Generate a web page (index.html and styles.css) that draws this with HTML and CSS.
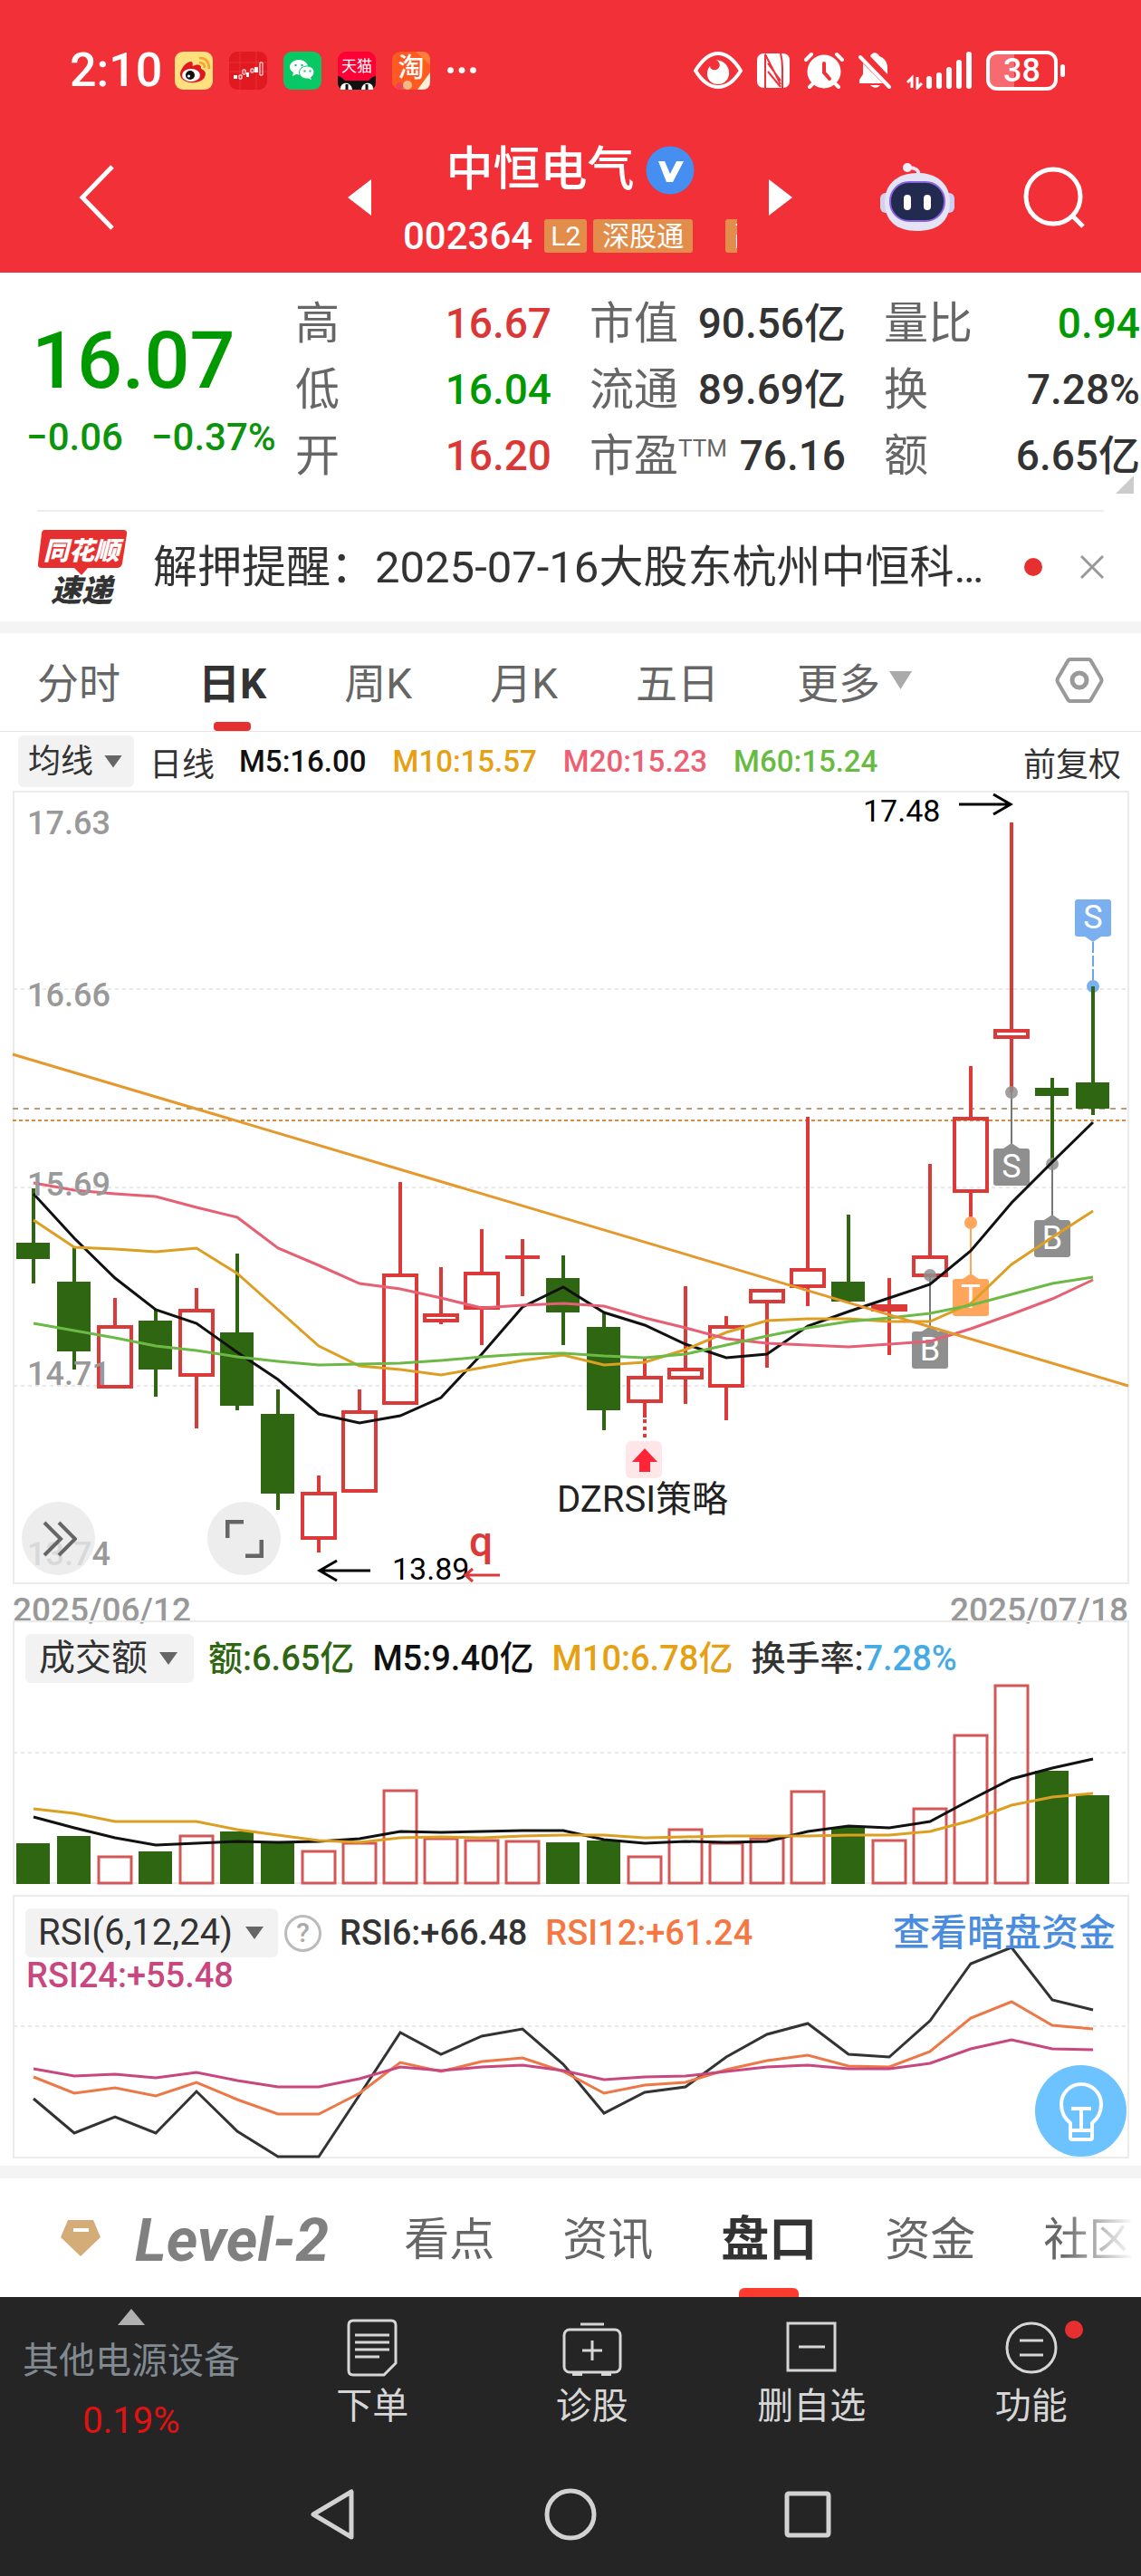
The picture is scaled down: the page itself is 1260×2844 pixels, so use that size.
FILE: index.html
```html
<!DOCTYPE html>
<html lang="zh-CN">

<head>
  <meta charset="UTF-8">
  <meta name="viewport" content="width=device-width, initial-scale=1.0">
  <title>中恒电气 002364</title>
  <link rel="stylesheet" href="styles.css">
</head>

<body>
<header class="header">
  <div class="status">
    <span class="time">2:10</span>
    <svg class="app" viewBox="0 0 42 42">
      <rect width="42" height="42" rx="9" fill="#ffdf7e"/>
      <path d="M27 12q6 0 6 6M27 7q11 0 11 12" fill="none" stroke="#f2a52c" stroke-width="2.6"/>
      <path d="M6 26C5 19 14 10 18 11c3 1 1 4 2 5 3-2 10-3 9 3 5 2 6 5 4 9-3 8-25 9-27-2z" fill="#e0191f"/>
      <ellipse cx="18" cy="26" rx="10" ry="7" fill="#fff"/>
      <circle cx="17" cy="26" r="5" fill="#111"/>
      <circle cx="15.500" cy="27" r="1.500" fill="#fff"/>
    </svg>
    <svg class="app" viewBox="0 0 42 42">
      <rect width="42" height="42" rx="9" fill="#e01a20"/>
      <path d="M0 12h42M0 22h42M12 0v42M30 0v42" stroke="#ea3a3e" stroke-width=".8"/>
      <path d="M5 26h4v4H5zM19 23h3v5h-3zM28 17h4v6h-4z" fill="#fff"/>
      <path d="M11 26h3v4h-3zM15 20h3v5h-3zM24 19h3v4h-3zM34 12h3v14h-3z" fill="none" stroke="#fff"/>
    </svg>
    <svg class="app" viewBox="0 0 42 42">
      <rect width="42" height="42" rx="9" fill="#07c865"/>
      <path d="M17 9c-6 0-10 4-10 8 0 3 2 5 4 6l-1 4 4-2c8 2 13-3 13-8 0-4-4-8-10-8z" fill="#fff"/>
      <path d="M26 16c-5 0-8.500 3-8.500 7s4 7.500 10 7l4 2-1-3.500c6-4 4-12.500-4.500-12.500z" fill="#fff" stroke="#07c865"/>
      <path d="M13.500 14v2M20.500 14v2M23.500 20.500v2M29.500 20.500v2" stroke="#07c865" stroke-width="2"/>
    </svg>
    <svg class="app" viewBox="0 0 42 42">
      <rect width="42" height="42" rx="9" fill="#ff0036"/>
      <path d="M0 27c3 0 6 3 8 5h26c2-2 5-5 8-5v7q0 8-9 8H9q-9 0-9-8z" fill="#111"/>
      <path d="M3 42c-1-9 12-10 13 0zM26 42c1-10 14-9 13 0z" fill="#fff"/>
      <path d="M10 36v6M32 36v6" stroke="#111" stroke-width="3"/>
      <text class="app-text" x="21" y="22" font-size="17">天猫</text>
    </svg>
    <svg class="app" viewBox="0 0 42 42">
      <rect width="42" height="42" rx="9" fill="#ff5a1f"/>
      <path d="M26 0h7q9 0 9 9v6z" fill="#ff7d3c"/>
      <path d="M28 42l14-19v10q0 9-9 9z" fill="#fff0dc"/>
      <circle cx="8" cy="38" r="4" fill="#f0425a"/>
      <circle cx="17" cy="37" r="5" fill="#f0b98a"/>
      <text class="app-text" x="21" y="28" font-size="29" font-weight="500">淘</text>
    </svg>
    <svg class="dots" viewBox="0 0 30 8"><g fill="#fff"><circle cx="4" cy="4" r="3"/><circle cx="15" cy="4" r="3"/><circle cx="26" cy="4" r="3"/></g></svg>
    <div class="status-right">
      <svg width="54" height="42" viewBox="0 0 54 42">
        <path d="M2 21C10 8 18 2 27 2s17 6 25 19C44 34 36 39 27 39S10 34 2 21z" fill="none" stroke="#fff" stroke-width="4"/>
        <path d="M25 9c5 3 5 9 0 11-4 1-7-1-7-4-6 7-3 20 9 20 16 0 17-25-2-27z" fill="#fff"/>
      </svg>
      <svg width="38" height="42" viewBox="0 0 38 42">
        <rect x="1" y="2" width="36" height="38" rx="7" fill="#fff"/>
        <path d="M10 40V3l17 33M27 2q2 8 2 16v22M13 13l14 19M13 22l14 17" fill="none" stroke="#f13038" stroke-width="2"/>
      </svg>
      <svg width="44" height="42" viewBox="0 0 44 42">
        <circle cx="22" cy="22" r="18.500" fill="#fff"/>
        <path d="M2 9l6-6M42 9l-6-6M9 36l-3 3M35 36l3 3" stroke="#fff" stroke-width="4" stroke-linecap="round"/>
        <path d="M22 13v10l6 7" fill="none" stroke="#f13038" stroke-width="4" stroke-linecap="round"/>
      </svg>
      <svg width="38" height="42" viewBox="0 0 38 42">
        <path d="M14 5c2-5 8-5 10 0 6 2 9 7 9 13v7zM6 13l22 22H2v-4l4-6zM14 37h11q-5 6-11 0z" fill="#fff"/>
        <path d="M3 6l32 33" stroke="#fff" stroke-width="4" stroke-linecap="round"/>
      </svg>
      <svg class="signal" width="74" height="42" viewBox="0 0 74 42">
        <path d="M7 40V29l-5 5M13 28v12l5-5" fill="none" stroke="#fff" stroke-width="3"/>
        <path d="M26 30v8M37 26v12M48 20v18M59 12v26M70 3v35" stroke="#fff" stroke-width="6" stroke-linecap="round"/>
      </svg>
      <span class="battery">38</span>
    </div>
  </div>

  <div class="titlebar">
    <button class="back" aria-label="返回">
      <svg width="40" height="72" viewBox="0 0 40 72"><path d="M37 2L4 36l33 34" fill="none" stroke="#fff" stroke-width="5"/></svg>
    </button>
    <div class="stock">
      <button aria-label="上一只"><svg width="26" height="40" viewBox="0 0 26 40"><path d="M26 0v40L0 20z" fill="#fff"/></svg></button>
      <div class="stock-info">
        <h1 class="name">中恒电气
          <svg width="54" height="54" viewBox="0 0 54 54"><circle cx="27" cy="27" r="26.500" fill="#468ff0"/><path d="M14 17h7l6 14 7-14h8L30 40h-7z" fill="#fff"/></svg>
        </h1>
        <div class="code-row">
          <span class="code">002364</span>
          <span class="tag">L2</span>
          <span class="tag wide">深股通</span>
          <span class="tag more">融</span>
        </div>
      </div>
      <button aria-label="下一只"><svg width="26" height="40" viewBox="0 0 26 40"><path d="M0 0v40l26-20z" fill="#fff"/></svg></button>
    </div>
    <div class="tools">
      <button aria-label="智能助手">
        <svg width="82" height="76" viewBox="0 0 82 76">
          <path d="M30 5q13-1 13 10" fill="none" stroke="#e6e2f5" stroke-width="4"/>
          <circle cx="30" cy="5" r="5" fill="#f1effb"/>
          <rect x="0" y="33" width="14" height="22" rx="6" fill="#d3d2ec"/>
          <rect x="68" y="33" width="14" height="22" rx="6" fill="#cfcdf0"/>
          <path d="M41 11c24 0 36 14 36 32 0 20-12 32-36 32S5 63 5 43c0-18 12-32 36-32z" fill="#e4e4f6"/>
          <rect x="11" y="21" width="60" height="43" rx="21" fill="#232a50" stroke="#8a62e0" stroke-width="2"/>
          <rect x="26" y="35" width="8" height="17" rx="4" fill="#fff"/>
          <rect x="48" y="35" width="8" height="17" rx="4" fill="#fff"/>
        </svg>
      </button>
      <button aria-label="搜索">
        <svg width="68" height="68" viewBox="0 0 68 68"><circle cx="33" cy="33" r="30" fill="none" stroke="#fff" stroke-width="5"/><path d="M54 54l12 12" stroke="#fff" stroke-width="5"/></svg>
      </button>
    </div>
  </div>
</header>

<main>
  <section class="quote">
    <div class="price">
      <strong class="now">16.07</strong>
      <div class="change"><span>−0.06</span><span>−0.37%</span></div>
    </div>
    <dl class="stats">
      <div><dt>高</dt><dd class="up">16.67</dd></div>
      <div><dt>市值</dt><dd>90.56亿</dd></div>
      <div><dt>量比</dt><dd class="down">0.94</dd></div>
      <div><dt>低</dt><dd class="down">16.04</dd></div>
      <div><dt>流通</dt><dd>89.69亿</dd></div>
      <div><dt>换</dt><dd>7.28%</dd></div>
      <div><dt>开</dt><dd class="up">16.20</dd></div>
      <div><dt>市盈<sup>TTM</sup></dt><dd>76.16</dd></div>
      <div><dt>额</dt><dd>6.65亿</dd></div>
    </dl>
    <span class="corner"></span>
  </section>

  <section class="notice">
    <svg class="notice-logo" width="100" height="84" viewBox="0 0 100 84">
      <path d="M9 1h86q5 0 4 5l-5 32q-1 5-6 5H56l-7 8-8-8H5q-5 0-4-5L5 5q0-4 4-4z" fill="#e6302f"/>
      <text x="49" y="34" font-size="28" fill="#fff">同花顺</text>
      <text x="49" y="80" font-size="34" fill="#333">速递</text>
    </svg>
    <a class="notice-text" href="#">解押提醒：2025-07-16大股东杭州中恒科…</a>
    <i class="red-dot"></i>
    <button aria-label="关闭"><svg width="26" height="26" viewBox="0 0 26 26"><path d="M1 1l24 24M25 1L1 25" stroke="#999" stroke-width="3"/></svg></button>
  </section>

  <nav class="periods">
    <button>分时</button>
    <button class="active">日K</button>
    <button>周K</button>
    <button>月K</button>
    <button>五日</button>
    <button class="more-btn">更多</button>
    <button class="setting" aria-label="设置">
      <svg width="54" height="52" viewBox="0 0 54 52"><path d="M17 3h20q2 0 3 2l11 19q1 2 0 4L40 47q-1 2-3 2H17q-2 0-3-2L3 28q-1-2 0-4L14 5q1-2 3-2z" fill="none" stroke="#999" stroke-width="4"/><circle cx="27" cy="26" r="8" fill="none" stroke="#999" stroke-width="5"/></svg>
    </button>
  </nav>

  <div class="ma-legend">
    <label class="chip small"><select aria-label="主图指标"><option>均线</option></select></label>
    <span class="day">日线</span>
    <span class="black">M5:16.00</span>
    <span class="gold">M10:15.57</span>
    <span class="pink">M20:15.23</span>
    <span class="green">M60:15.24</span>
    <span class="adjust">前复权</span>
  </div>

  <!-- K线 -->
  <div class="panel">
    <svg class="chart" viewBox="0 873 1260 877">
      <rect class="frame" x="15" y="874" width="1231" height="874"/>
      <path class="grid" d="M15 1092H1246M15 1311H1246M15 1530H1246"/>
      <path d="M14 1224H1246" stroke="#b5a07c" stroke-width="2" stroke-dasharray="6 6"/>
      <path d="M14 1237H1246" stroke="#d98a3c" stroke-width="2" stroke-dasharray="4 3"/>

      <g class="fall">
        <path d="M37 1312V1417M82 1377V1512M172 1445V1542M262 1384V1557M307 1534V1667M622 1386V1485M667 1450V1579M937 1341V1438M1162 1190V1284M1207 1089V1231"/>
        <rect x="18" y="1372" width="37" height="18"/>
        <rect x="63" y="1415" width="37" height="77"/>
        <rect x="153" y="1458" width="37" height="54"/>
        <rect x="243" y="1471" width="37" height="81"/>
        <rect x="288" y="1561" width="37" height="88"/>
        <rect x="603" y="1411" width="37" height="38"/>
        <rect x="648" y="1465" width="37" height="92"/>
        <rect x="918" y="1415" width="37" height="22"/>
        <rect x="1143" y="1201" width="37" height="9"/>
        <rect x="1188" y="1195" width="37" height="29"/>
      </g>
      <g class="rise">
        <path d="M127 1433V1465M217 1422V1447M217 1518V1577M352 1629V1649M352 1698V1714M397 1534V1559M442 1305V1408M487 1399V1452M487 1458V1462M532 1357V1406M532 1444V1485M577 1368V1431M558 1388H596M712 1500V1521M712 1547V1565M757 1420V1512M757 1521V1550M802 1453V1465M802 1530V1568M847 1437V1510M892 1233V1402M892 1420V1442M982 1411V1442M982 1446V1496M1027 1285V1388M1072 1177V1235M1072 1315V1349M1117 908V1138M1117 1145V1206"/>
        <rect x="109" y="1465" width="36" height="66"/>
        <rect x="199" y="1447" width="36" height="71"/>
        <rect x="334" y="1649" width="36" height="49"/>
        <rect x="379" y="1559" width="36" height="87"/>
        <rect x="424" y="1408" width="36" height="141"/>
        <rect x="469" y="1452" width="36" height="6"/>
        <rect x="514" y="1406" width="36" height="38"/>
        <rect x="694" y="1521" width="36" height="26"/>
        <rect x="739" y="1512" width="36" height="9"/>
        <rect x="784" y="1465" width="36" height="65"/>
        <rect x="829" y="1425" width="36" height="12"/>
        <rect x="874" y="1402" width="36" height="18"/>
        <rect x="964" y="1442" width="36" height="4"/>
        <rect x="1009" y="1388" width="36" height="20"/>
        <rect x="1054" y="1235" width="36" height="80"/>
        <rect x="1099" y="1138" width="36" height="7"/>
        <path d="M712 1567V1590" stroke-dasharray="4 4"/>
      </g>

      <!-- 买卖点 -->
      <g stroke-width="2">
        <g fill="#8f8f8f" stroke="none">
          <path d="M1026 1408h2v64h-2zM1116 1206h2v60h-2zM1161 1284h2v60h-2z" fill="#777"/>
          <path d="M1018 1470l9-6 9 6zM1108 1268l9-6 9 6zM1153 1347l9-6 9 6z"/>
          <circle cx="1027" cy="1408" r="7" opacity=".85"/><circle cx="1117" cy="1206" r="7" opacity=".85"/><circle cx="1162" cy="1285" r="7" opacity=".85"/>
          <rect x="1007" y="1470" width="40" height="41" rx="3"/>
          <rect x="1097" y="1268" width="40" height="41" rx="3"/>
          <rect x="1142" y="1347" width="40" height="41" rx="3"/>
        </g>
        <g fill="#ffa65c">
          <path d="M1071 1350h2v62h-2zM1063 1412l9-6 9 6z"/>
          <circle cx="1072" cy="1350" r="7"/><rect x="1052" y="1412" width="40" height="41" rx="3"/>
        </g>
        <g fill="#7bb0f0">
          <path d="M1198 1034l9 6 9-6z"/>
          <rect x="1187" y="993" width="40" height="41" rx="3"/>
          <circle cx="1207" cy="1089" r="7"/>
          <path d="M1207 1040V1082" stroke="#6aa6e8" stroke-dasharray="12 3"/>
        </g>
        <path d="M1207 1089V1110" stroke="#2f6612" stroke-width="4"/>
        <g class="mark">
          <text x="1027" y="1502">B</text><text x="1117" y="1300">S</text><text x="1162" y="1379">B</text><text x="1072" y="1444">T</text><text x="1207" y="1025">S</text>
        </g>
      </g>

      <path class="line" stroke="#111" d="M37 1318L82 1367 127 1411 172 1446 217 1461 262 1493 307 1523 352 1561 397 1571 442 1563 487 1543 532 1495 577 1443 622 1421 667 1449 712 1463 757 1484 802 1499 847 1495 892 1464 937 1448 982 1433 1027 1418 1072 1381 1117 1328 1162 1283 1207 1239"/>
      <path class="line" stroke="#dd9f22" d="M37 1347L82 1377 127 1379 172 1382 217 1378 262 1406 307 1446 352 1486 397 1508 442 1512 487 1518 532 1510 577 1502 622 1496 667 1507 712 1504 757 1490 802 1471 847 1458 892 1456 937 1456 982 1459 1027 1459 1072 1439 1117 1396 1162 1366 1207 1337"/>
      <path class="line" stroke="#e66074" d="M37 1306L82 1314 127 1318 172 1321 217 1333 262 1344 307 1378 352 1397 397 1417 442 1423 487 1433 532 1444 577 1441 622 1439 667 1442 712 1455 757 1466 802 1478 847 1483 892 1485 937 1487 982 1484 1027 1481 1072 1467 1117 1451 1162 1434 1207 1413"/>
      <path class="line" stroke="#6cba45" d="M37 1461L82 1469 127 1477 172 1486 217 1491 262 1498 307 1503 352 1507 397 1506 442 1505 487 1502 532 1498 577 1495 622 1494 667 1497 712 1499 757 1495 802 1485 847 1475 892 1466 937 1459 982 1455 1027 1450 1072 1441 1117 1429 1162 1417 1207 1410"/>
      <path class="line" stroke="#e5982c" d="M14 1164L1246 1530"/>

      <rect x="691" y="1591" width="40" height="41" rx="6" fill="#ffe6e9"/>
      <path d="M712 1599l14 15h-8v11h-12v-11h-8z" fill="#ff2538"/>
      <text class="label" x="615" y="1669">DZRSI策略</text>

      <g class="scale">
        <text x="30" y="921">17.63</text>
        <text x="30" y="1111">16.66</text>
        <text x="30" y="1320">15.69</text>
        <text x="30" y="1529">14.71</text>
        <text x="30" y="1728">13.74</text>
      </g>
      <g class="extreme">
        <text x="953" y="907">17.48</text>
        <text x="433" y="1744">13.89</text>
        <path d="M1059 888H1116M1097 877L1116 888 1097 899M409 1734H353M372 1723L353 1734 372 1745"/>
      </g>
      <text class="q" x="518" y="1718">q</text>
      <path d="M552 1739H515M522 1732L514 1739 522 1746" fill="none" stroke="#dc3a39" stroke-width="3"/>
    </svg>
    <div class="float-btns">
      <button aria-label="展开"><svg width="40" height="40" viewBox="0 0 40 40"><path d="M4 2l18 18L4 38M20 2l18 18-18 18" fill="none" stroke="#666" stroke-width="4"/></svg></button>
      <button aria-label="全屏"><svg width="42" height="42" viewBox="0 0 42 42"><path d="M2 20V2h18M40 22v18H22" fill="none" stroke="#666" stroke-width="5"/></svg></button>
    </div>
  </div>

  <div class="dates"><span>2025/06/12</span><span>2025/07/18</span></div>

  <!-- 成交额 -->
  <div class="panel volume">
    <svg class="chart" viewBox="0 1789 1260 292">
      <rect class="frame" x="15" y="1790" width="1231" height="289"/>
      <path class="grid" d="M15 1935H1246"/>
      <g class="fall">
        <rect x="18" y="2035" width="37" height="45"/>
        <rect x="63" y="2027" width="37" height="53"/>
        <rect x="153" y="2044" width="37" height="36"/>
        <rect x="243" y="2022" width="37" height="58"/>
        <rect x="288" y="2035" width="37" height="45"/>
        <rect x="603" y="2034" width="37" height="46"/>
        <rect x="648" y="2032" width="37" height="48"/>
        <rect x="918" y="2017" width="37" height="63"/>
        <rect x="1143" y="1955" width="37" height="125"/>
        <rect x="1188" y="1982" width="37" height="98"/>
      </g>
      <g class="vol-rise">
        <rect x="109" y="2050" width="36" height="29"/>
        <rect x="199" y="2027" width="36" height="52"/>
        <rect x="334" y="2044" width="36" height="35"/>
        <rect x="379" y="2035" width="36" height="44"/>
        <rect x="424" y="1977" width="36" height="102"/>
        <rect x="469" y="2030" width="36" height="49"/>
        <rect x="514" y="2032" width="36" height="47"/>
        <rect x="559" y="2033" width="36" height="46"/>
        <rect x="694" y="2050" width="36" height="29"/>
        <rect x="739" y="2020" width="36" height="59"/>
        <rect x="784" y="2035" width="36" height="44"/>
        <rect x="829" y="2030" width="36" height="49"/>
        <rect x="874" y="1978" width="36" height="101"/>
        <rect x="964" y="2032" width="36" height="47"/>
        <rect x="1009" y="1997" width="36" height="82"/>
        <rect x="1054" y="1916" width="36" height="163"/>
        <rect x="1099" y="1861" width="36" height="218"/>
      </g>
      <path class="line" stroke="#111" d="M37 2006L82 2018 127 2029 172 2037 217 2035 262 2033 307 2034 352 2033 397 2030 442 2022 487 2023 532 2022 577 2021 622 2021 667 2031 712 2035 757 2033 802 2034 847 2033 892 2022 937 2016 982 2018 1027 2011 1072 1987 1117 1964 1162 1952 1207 1942"/>
      <path class="line" stroke="#dd9f22" d="M37 1997L82 2002 127 2011 172 2011 217 2011 262 2020 307 2026 352 2032 397 2034 442 2029 487 2028 532 2029 577 2027 622 2026 667 2026 712 2029 757 2028 802 2027 847 2027 892 2027 937 2026 982 2026 1027 2022 1072 2010 1117 1993 1162 1984 1207 1980"/>
    </svg>
    <div class="sub-legend">
      <label class="chip"><select aria-label="副图指标一"><option>成交额</option></select></label>
      <span class="dark-green">额:6.65亿</span>
      <span class="black">M5:9.40亿</span>
      <span class="gold">M10:6.78亿</span>
      <span>换手率:<span class="sky">7.28%</span></span>
    </div>
  </div>

  <!-- RSI -->
  <div class="panel rsi">
    <svg class="chart" viewBox="0 2092 1260 292">
      <rect class="frame" x="15" y="2093" width="1231" height="289"/>
      <path class="grid" d="M15 2237H1246"/>
      <path class="line" stroke="#333" d="M37 2317L82 2355 127 2337 172 2355 217 2309 262 2353 307 2381 352 2381 397 2313 442 2244 487 2268 532 2248 577 2240 622 2279 667 2333 712 2310 757 2304 802 2271 847 2246 892 2234 937 2268 982 2271 1027 2231 1072 2168 1117 2150 1162 2208 1207 2219"/>
      <path class="line" stroke="#ec7847" d="M37 2293L82 2311 127 2305 172 2314 217 2299 262 2318 307 2334 352 2334 397 2311 442 2277 487 2287 532 2276 577 2272 622 2287 667 2311 712 2302 757 2299 802 2285 847 2275 892 2269 937 2281 982 2282 1027 2265 1072 2228 1117 2210 1162 2236 1207 2240"/>
      <path class="line" stroke="#c9477f" d="M37 2284L82 2292 127 2290 172 2294 217 2288 262 2297 307 2304 352 2304 397 2295 442 2282 487 2286 532 2282 577 2280 622 2286 667 2296 712 2293 757 2292 802 2287 847 2282 892 2280 937 2284 982 2284 1027 2278 1072 2262 1117 2252 1162 2262 1207 2263"/>
    </svg>
    <div class="sub-legend">
      <label class="chip"><select aria-label="副图指标二"><option>RSI(6,12,24)</option></select></label>
      <button class="help" aria-label="指标说明">?</button>
      <span>RSI6:+66.48</span>
      <span class="orange">RSI12:+61.24</span>
      <a class="fund-link" href="#">查看暗盘资金</a>
      <span class="magenta">RSI24:+55.48</span>
    </div>
    <button class="bulb" aria-label="提示">
      <svg width="48" height="66" viewBox="0 0 48 66"><g fill="none" stroke="#fff" stroke-width="4"><path d="M12 62V46Q2 38 2 25a22 22 0 0 1 44 0q0 13-10 21v16q0 2-2 2H14q-2 0-2-2zM13 30h22M24 30v22M12 54h24"/></g></svg>
    </button>
  </div>

  <nav class="sections">
    <svg width="46" height="42" viewBox="0 0 46 42"><path d="M9 1h28l8 19-22 21L1 20z" fill="#d3ac78"/><path d="M15 12h17" stroke="#fff" stroke-width="4"/></svg>
    <a class="level2" href="#">Level-2</a>
    <a href="#">看点</a>
    <a href="#">资讯</a>
    <a class="active" href="#">盘口</a>
    <a href="#">资金</a>
    <a href="#">社区</a>
  </nav>
</main>

<footer class="footer">
  <div class="actions">
    <button class="industry">
      <svg width="30" height="18" viewBox="0 0 30 18"><path d="M15 0l15 18H0z" fill="#b0b0b0"/></svg>
      <span>其他电源设备</span>
      <em>0.19%</em>
    </button>
    <button>
      <svg width="66" height="64" viewBox="0 0 66 64"><g fill="none" stroke="#d6d6d6" stroke-width="3"><path d="M12 2h42q5 0 5 5v42L46 62H12q-5 0-5-5V7q0-5 5-5zM14 18h38M14 26h38M14 34h38M14 42h27"/></g></svg>
      <span>下单</span>
    </button>
    <button>
      <svg width="66" height="64" viewBox="0 0 66 64"><g fill="none" stroke="#d6d6d6" stroke-width="3"><rect x="2" y="12" width="62" height="47" rx="6"/><path d="M20 6h26M33 24v22M22 35h22"/><path d="M11 61h11M43 61h11" stroke-width="4"/></g></svg>
      <span>诊股</span>
    </button>
    <button>
      <svg width="66" height="64" viewBox="0 0 66 64"><g fill="none" stroke="#d6d6d6" stroke-width="3"><rect x="7" y="5" width="52" height="52"/><path d="M19 31h29"/></g></svg>
      <span>删自选</span>
    </button>
    <button class="func">
      <svg width="66" height="64" viewBox="0 0 66 64"><g fill="none" stroke="#d6d6d6" stroke-width="3"><circle cx="33" cy="32" r="27"/><path d="M20 24h26M20 40h26"/></g></svg>
      <span>功能</span>
    </button>
  </div>
  <div class="sysnav">
    <button aria-label="后退"><svg width="52" height="58" viewBox="0 0 52 58"><path d="M46 4v50L4 29z" fill="none" stroke="#d2d2d2" stroke-width="5" stroke-linejoin="round"/></svg></button>
    <button aria-label="主页"><svg width="58" height="58" viewBox="0 0 58 58"><circle cx="29" cy="29" r="26" fill="none" stroke="#d2d2d2" stroke-width="5"/></svg></button>
    <button aria-label="最近任务"><svg width="52" height="58" viewBox="0 0 52 58"><rect x="3" y="6" width="46" height="46" rx="2" fill="none" stroke="#d2d2d2" stroke-width="5"/></svg></button>
  </div>
</footer>
</body>

</html>
```
FILE: styles.css
```css
* {
  box-sizing: border-box;
}

body {
  margin: 0;
  background: #fff;
  color: #333;
  font-family: Roboto, "Noto Sans CJK SC", sans-serif;
  font-size: 38px;
}

button {
  padding: 0;
  border: 0;
  background: none;
  color: inherit;
  font: inherit;
}

a {
  color: inherit;
  text-decoration: none;
}

svg {
  display: block;
  flex: none;
}

/* 顶部 */
.header {
  background: #f13038;
  color: #fff;
}

.status {
  display: flex;
  align-items: center;
  gap: 18px;
  padding: 56px 92px 0 77px;
}

.time {
  margin-right: -4px;
  font-size: 52px;
  font-weight: 500;
  line-height: 44px;
}

.app {
  width: 42px;
  height: 42px;
}

.app-text {
  fill: #fff;
  text-anchor: middle;
}

.dots {
  width: 34px;
}

.status-right {
  display: flex;
  align-items: center;
  gap: 15px;
  margin-left: auto;
}

.battery {
  position: relative;
  width: 79px;
  height: 44px;
  border: 4px solid #fff;
  border-radius: 12px;
  background: linear-gradient(90deg, #f66a70 38%, transparent 38%);
  font-size: 36px;
  font-weight: 500;
  line-height: 37px;
  text-align: center;
}

.battery::after {
  content: "";
  position: absolute;
  top: 11px;
  right: -12px;
  width: 5px;
  height: 14px;
  border-radius: 3px;
  background: #fff;
}

.titlebar {
  display: grid;
  grid-template-columns: 1fr auto 1fr;
  align-items: center;
  padding: 56px 62px 22px 87px;
}

.stock {
  display: flex;
  align-items: center;
  gap: 35px;
  margin-right: 26px;
}

.stock-info {
  width: 369px;
  overflow-x: clip;
}

.name {
  display: flex;
  align-items: center;
  justify-content: center;
  gap: 12px;
  margin: 0 0 22px;
  font-size: 52px;
  font-weight: 500;
  line-height: 64px;
}

.code-row {
  display: flex;
  align-items: center;
  gap: 7px;
}

.code {
  margin-right: 6px;
  font-size: 42px;
  font-weight: 500;
  line-height: 37px;
}

.tag {
  flex: none;
  padding: 0 7px;
  border-radius: 3px;
  background: #e38d4b;
  font-size: 30px;
  line-height: 37px;
}

.tag.wide {
  padding: 0 10px;
}

.tag.more {
  margin-left: 29px;
  padding: 0 10px;
}

.tools {
  display: flex;
  align-items: center;
  justify-content: flex-end;
  gap: 76px;
}

/* 行情 */
.quote {
  position: relative;
  display: flex;
  padding: 20px 1px 23px 29px;
}

.price {
  width: 297px;
  white-space: nowrap;
}

.now {
  display: block;
  padding: 22px 0 0 6px;
  color: #009900;
  font-size: 88px;
  font-weight: 500;
  line-height: 110px;
}

.change {
  display: flex;
  gap: 31px;
  color: #0c940c;
  font-size: 42px;
  font-weight: 500;
  line-height: 60px;
}

.stats {
  display: grid;
  flex: 1;
  grid-template-columns: repeat(3, 1fr);
  column-gap: 42px;
  margin: 0;
}

.stats div {
  display: flex;
  justify-content: space-between;
  line-height: 73px;
  white-space: nowrap;
}

.stats dt {
  height: 73px;
  color: #666;
  font-size: 49px;
}

.stats sup {
  font-size: 26px;
  line-height: 0;
  vertical-align: 16px;
}

.stats dd {
  height: 73px;
  margin: 0;
  font-size: 46px;
  font-weight: 500;
}

.stats .up {
  color: #dc3737;
}

.stats .down {
  color: #009900;
}

.corner {
  position: absolute;
  right: 8px;
  bottom: 18px;
  width: 20px;
  height: 20px;
  background: #ccc;
  clip-path: polygon(100% 0, 100% 100%, 0 100%);
}

.notice {
  display: flex;
  align-items: center;
  height: 123px;
  margin: 0 41px;
  border-top: 2px solid #eee;
}

.notice-logo {
  overflow: visible;
}

.notice-logo text {
  font-weight: 900;
  font-style: italic;
  text-anchor: middle;
}

.notice-text {
  flex: 1;
  margin-left: 28px;
  padding-bottom: 8px;
  overflow: hidden;
  font-size: 49px;
  white-space: nowrap;
}

.red-dot {
  width: 20px;
  height: 20px;
  margin-right: 42px;
  border-radius: 50%;
  background: #e6302f;
}

/* 周期切换 */
.periods {
  display: flex;
  align-items: stretch;
  gap: 86px;
  height: 122px;
  padding: 0 41px;
  border-top: 13px solid #f4f4f4;
  border-bottom: 1px solid #e4e4e4;
  color: #666;
  font-size: 46px;
}

.periods button {
  padding-bottom: 4px;
}

.periods .active,
.sections .active {
  position: relative;
  color: #333;
  font-weight: 700;
}

.periods .active::after {
  content: "";
  position: absolute;
  bottom: 0;
  left: 17px;
  width: 41px;
  height: 10px;
  border-radius: 4px;
  background: #e6302f;
}

.more-btn {
  display: flex;
  align-items: center;
  gap: 10px;
}

.more-btn::after {
  content: "";
  width: 25px;
  height: 20px;
  background: #aaa;
  clip-path: polygon(0 0, 100% 0, 50% 100%);
}

.setting {
  margin-left: auto;
}

.ma-legend {
  display: flex;
  align-items: center;
  gap: 29px;
  height: 65px;
  padding: 0 22px 0 20px;
  font-size: 33px;
  font-weight: 500;
}

.chip {
  display: flex;
  align-items: center;
  gap: 13px;
  height: 54px;
  padding: 0 18px 0 15px;
  border-radius: 6px;
  background: #f2f2f2;
}

.chip::after {
  content: "";
  width: 20px;
  height: 14px;
  background: #666;
  clip-path: polygon(0 0, 100% 0, 50% 100%);
}

.chip select {
  padding: 0;
  border: 0;
  appearance: none;
  background: none;
  color: #333;
  font: inherit;
  font-size: 40px;
  font-weight: 400;
}

.chip.small {
  gap: 11px;
  height: 57px;
  margin-right: -12px;
  padding: 0 13px 0 11px;
}

.chip.small select {
  font-size: 36px;
}

.day,
.adjust {
  font-size: 36px;
  font-weight: 400;
}

.day {
  margin-right: -2px;
}

.adjust {
  margin-left: auto;
}

.black { color: #111; }
.gold { color: #e5a013; }
.pink { color: #ee5f73; }
.green { color: #68bb42; }
.dark-green { color: #2f6612; }
.sky { color: #46aae6; }
.orange { color: #f57842; }
.magenta { color: #c9477f; }

/* 图表 */
.panel {
  position: relative;
}

.chart {
  width: 100%;
  height: auto;
}

.frame {
  fill: none;
  stroke: #ebebeb;
  stroke-width: 2;
}

.grid {
  stroke: #e8e8e8;
  stroke-width: 2;
  stroke-dasharray: 4 4;
}

.fall {
  fill: #2f6612;
  stroke-width: 0;
}

.fall path {
  stroke: #2f6612;
  stroke-width: 4;
}

.rise {
  fill: none;
  stroke: #dc3a39;
  stroke-width: 4;
}

.vol-rise {
  fill: none;
  stroke: #d45656;
  stroke-width: 3;
}

.line {
  fill: none;
  stroke-width: 3;
}

.mark {
  fill: #fff;
  font-size: 36px;
  text-anchor: middle;
}

.label {
  fill: #222;
  font-size: 40px;
}

.scale {
  fill: #999;
  font-size: 36px;
  font-weight: 500;
}

.extreme {
  fill: #000;
  font-size: 34px;
}

.extreme path {
  fill: none;
  stroke: #000;
  stroke-width: 3;
}

.q {
  fill: #dc3a39;
  font-size: 46px;
  font-weight: 500;
}

.float-btns {
  position: absolute;
  bottom: 11px;
  left: 24px;
  display: flex;
  gap: 124px;
}

.float-btns button {
  display: grid;
  place-items: center;
  width: 81px;
  height: 81px;
  border-radius: 50%;
  background: rgba(232, 232, 232, 0.8);
}

.dates {
  display: flex;
  justify-content: space-between;
  padding: 16px 14px 0;
  color: #999;
  font-size: 37px;
  font-weight: 500;
  line-height: 23px;
}

.rsi {
  margin-top: 11px;
}

.sub-legend {
  position: absolute;
  top: 15px;
  left: 28px;
  right: 28px;
  display: flex;
  flex-wrap: wrap;
  align-items: center;
  column-gap: 20px;
  font-weight: 500;
  line-height: 52px;
}

.volume .chip {
  margin-right: -4px;
}

.rsi .chip {
  margin-right: -13px;
  padding: 0 16px 0 14px;
}

.help {
  width: 41px;
  height: 41px;
  border: 3px solid #bbb;
  border-radius: 50%;
  color: #aaa;
  font-size: 30px;
  line-height: 34px;
}

.fund-link {
  margin-left: auto;
  color: #4a8de0;
  font-size: 41px;
}

.magenta {
  flex-basis: 100%;
  padding-left: 1px;
  line-height: 40px;
}

.bulb {
  position: absolute;
  right: 16px;
  bottom: 3px;
  display: grid;
  place-items: center;
  width: 101px;
  height: 101px;
  border-radius: 50%;
  background: #6cc3ff;
}

/* 底部栏目 */
.sections {
  display: flex;
  align-items: center;
  gap: 75px;
  height: 145px;
  margin-top: 7px;
  padding: 0 10px 0 66px;
  border-top: 14px solid #f4f4f4;
  color: #666;
  font-size: 50px;
  line-height: 131px;
  white-space: nowrap;
  overflow: hidden;
}

.sections a {
  height: 131px;
  padding-top: 3px;
}

.sections .level2 {
  margin: 0 8px 0 -38px;
  color: #808080;
  font-size: 66px;
  font-style: italic;
  font-weight: 700;
}

.sections .active {
  font-size: 53px;
}

.sections .active::after {
  content: "";
  position: absolute;
  bottom: 0;
  left: 20px;
  width: 66px;
  height: 10px;
  border-radius: 6px 6px 0 0;
  background: #ff3b30;
}

.sections a:last-child {
  background: linear-gradient(90deg, #666 20%, #fff);
  background-clip: text;
  color: transparent;
}

.footer {
  background: #252525;
  color: #d6d6d6;
}

.actions {
  display: flex;
  height: 170px;
}

.actions button {
  display: flex;
  flex: 1;
  flex-direction: column;
  align-items: center;
  padding-top: 24px;
  font-size: 40px;
  line-height: 66px;
}

.actions .industry {
  flex: none;
  width: 290px;
  padding-top: 13px;
  color: #808a90;
}

.industry span {
  margin-top: 7px;
}

.industry em {
  color: #e01212;
  font-style: normal;
}

.func {
  position: relative;
}

.func::after {
  content: "";
  position: absolute;
  top: 26px;
  left: calc(50% + 37px);
  width: 20px;
  height: 20px;
  border-radius: 50%;
  background: #e6302f;
}

.sysnav {
  display: flex;
  align-items: center;
  justify-content: center;
  gap: 207px;
  height: 139px;
}
```
